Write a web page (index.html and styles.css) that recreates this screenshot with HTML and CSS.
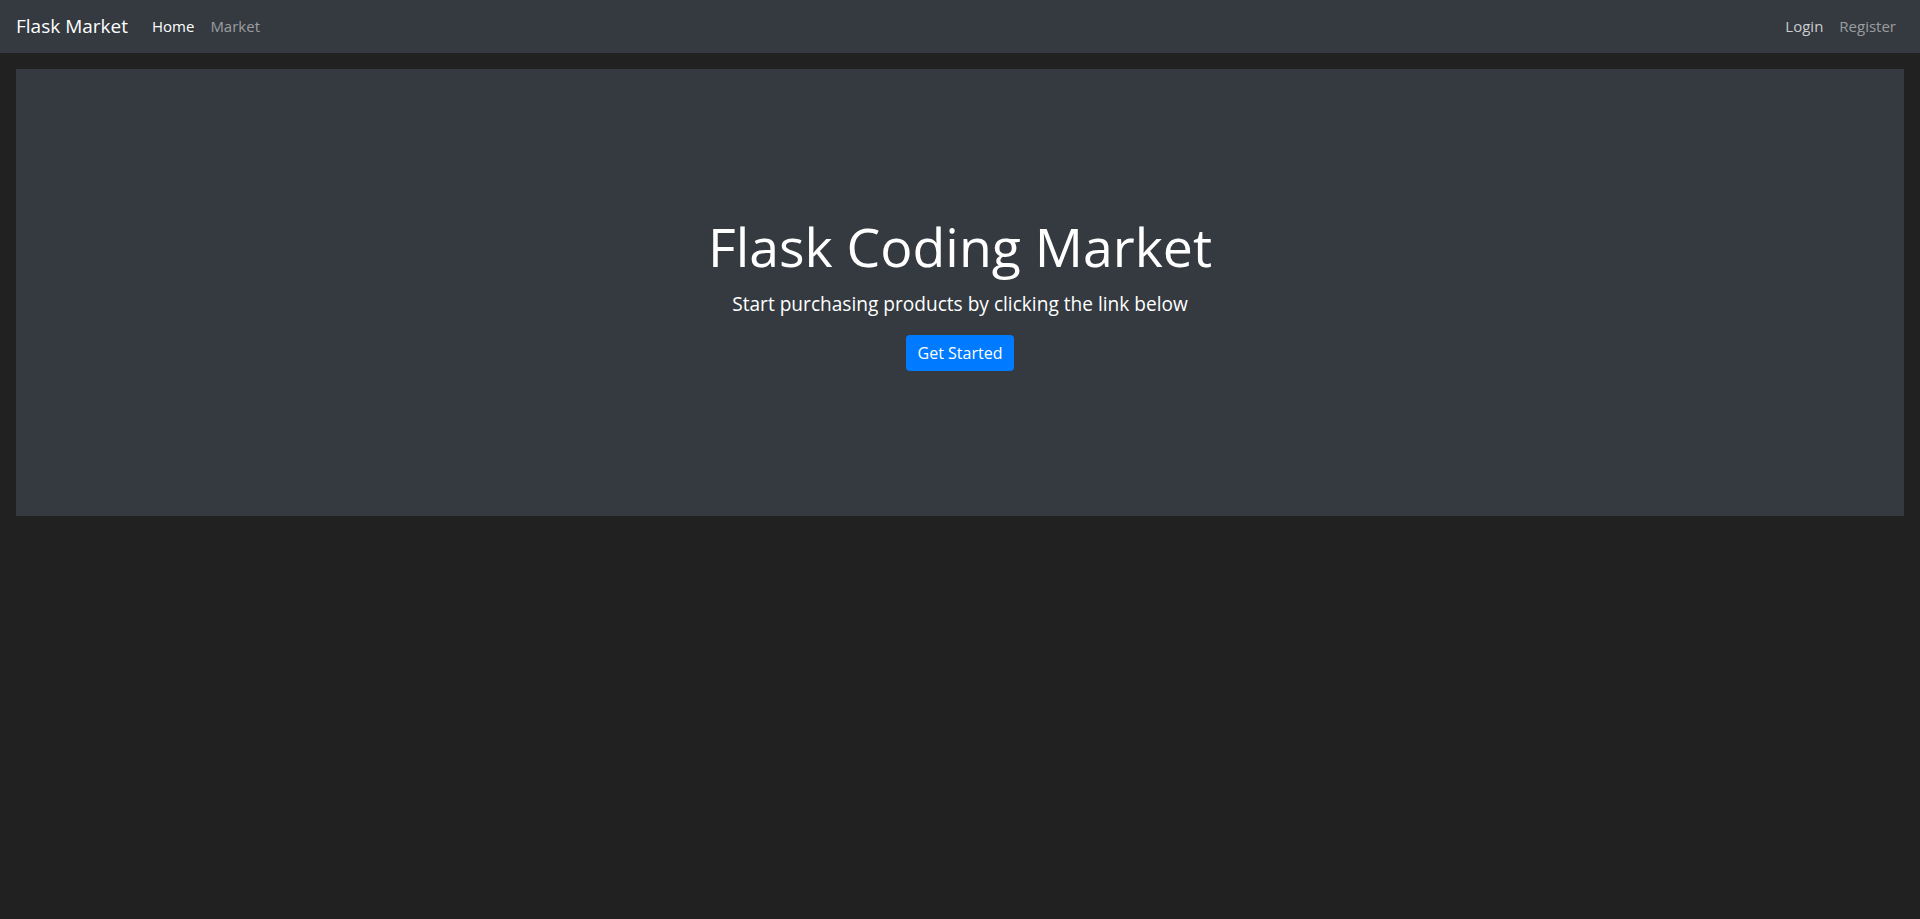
FILE: index.html
```html
<!DOCTYPE html>
<html lang="en">
<head>
<meta charset="utf-8">
<title>Flask Market</title>
<link rel="stylesheet" href="styles.css">
</head>
<body>
<nav class="navbar">
  <a class="brand" href="#">Flask Market</a>
  <ul class="nav nav-main">
    <li><a class="nav-link active" href="#">Home</a></li>
    <li><a class="nav-link" href="#">Market</a></li>
  </ul>
  <ul class="nav nav-right">
    <li><a class="nav-link hover" href="#">Login</a></li>
    <li><a class="nav-link" href="#">Register</a></li>
  </ul>
</nav>
<main class="jumbotron">
  <h1 class="display">Flask Coding Market</h1>
  <p class="lead">Start purchasing products by clicking the link below</p>
  <a class="btn" href="#">Get Started</a>
</main>
</body>
</html>
```

FILE: styles.css
```css
* { box-sizing: border-box; }
html, body { margin: 0; padding: 0; }
body {
  background: #212121;
  color: #fff;
  font-family: "Open Sans", "Noto Sans", "Liberation Sans", sans-serif;
  font-size: 16px;
  line-height: 1.5;
  height: 919px;
}
a { text-decoration: none; }
.navbar {
  display: flex;
  align-items: center;
  height: 53px;
  padding: 0 16px 1px;
  background: #343a40;
}
.brand {
  font-size: 19px;
  color: #fff;
  margin-right: 16px;
  line-height: 30px;
}
.nav {
  display: flex;
  list-style: none;
  margin: 0;
  padding: 0;
}
.nav-right { margin-left: auto; }
.nav-link {
  display: block;
  padding: 0 8px;
  color: rgba(255,255,255,.5);
  font-size: 15px;
  line-height: 24px;
}
.nav-link.active { color: #fff; }
.nav-link.hover { color: rgba(255,255,255,.75); }
.jumbotron {
  margin: 16px 16px 0;
  height: 447px;
  background: #343a40;
  display: flex;
  flex-direction: column;
  align-items: center;
  justify-content: center;
  text-align: center;
}
.display {
  font-size: 53.6px;
  font-weight: 400;
  line-height: 64px;
  margin: 0 0 10px;
}
.lead {
  font-size: 19.1px;
  font-weight: 400;
  line-height: 30px;
  margin: 0 0 16px;
}
.btn {
  display: inline-block;
  background: #007bff;
  color: #fff;
  border-radius: 4px;
  padding: 6px 12px;
  font-size: 16px;
  line-height: 24px;
}
```
